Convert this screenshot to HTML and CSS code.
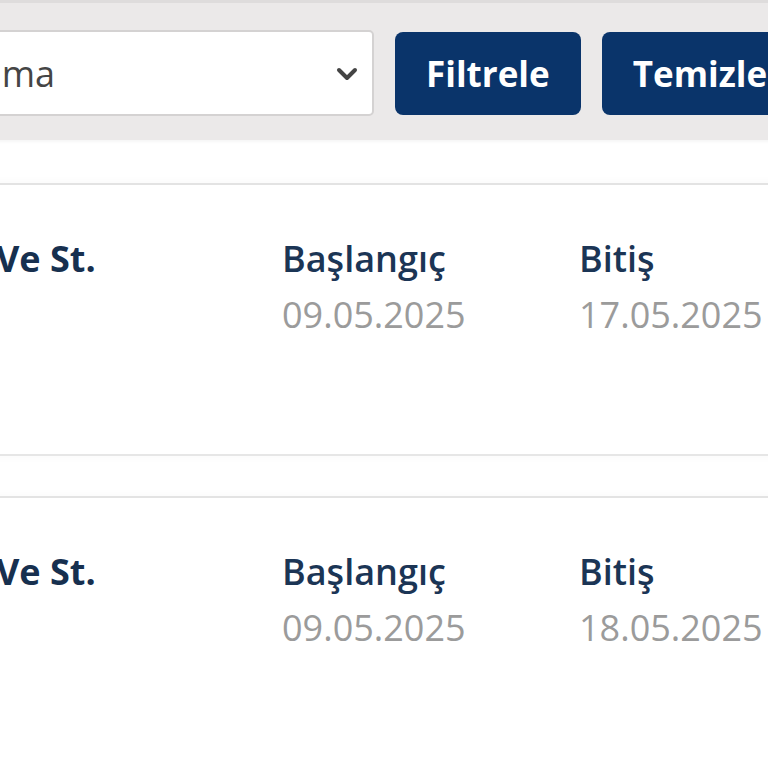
FILE: index.html
```html
<!DOCTYPE html>
<html lang="tr">
<head>
  <meta charset="UTF-8">
  <meta name="viewport" content="width=device-width, initial-scale=1.0">
  <title>Kampanyalar</title>
  <link rel="stylesheet" href="styles.css">
</head>
<body>
<div class="page">

  <div class="toolbar">
    <div class="select">
      <span class="select-value">Sıralama</span>
      <svg class="chevron" width="22" height="14" viewBox="0 0 22 14">
        <path d="M3 3 L11 11 L19 3" fill="none" stroke="#444" stroke-width="4" stroke-linecap="round" stroke-linejoin="round"/>
      </svg>
    </div>
    <button class="btn">Filtrele</button>
    <button class="btn">Temizle</button>
  </div>

  <div class="list">
    <div class="card">
      <div class="title">Bakım Ve St.</div>
      <div class="field">
        <div class="label">Başlangıç</div>
        <div class="value">09.05.2025</div>
      </div>
      <div class="field">
        <div class="label">Bitiş</div>
        <div class="value">17.05.2025</div>
      </div>
    </div>

    <div class="card">
      <div class="title">Bakım Ve St.</div>
      <div class="field">
        <div class="label">Başlangıç</div>
        <div class="value">09.05.2025</div>
      </div>
      <div class="field">
        <div class="label">Bitiş</div>
        <div class="value">18.05.2025</div>
      </div>
    </div>
  </div>

</div>
</body>
</html>
```

FILE: styles.css
```css
* {
  margin: 0;
  padding: 0;
  box-sizing: border-box;
}
body {
  height: 100vh;
  overflow: hidden;
  background: #fff;
  font-family: "Open Sans", "Noto Sans", sans-serif;
  font-size: 36px;
}
.page {
  margin-left: -150px;
  width: 1100px;
}

.toolbar {
  background: #ebe9e9;
  border-top: 3px solid #dedcdc;
  padding: 27px 0 24px 30px;
  height: 140px;
  display: flex;
  align-items: center;
  gap: 21px;
  box-shadow: 0 2px 3px rgba(0, 0, 0, 0.04);

  .select {
    width: 494px;
    height: 86px;
    background: #fff;
    border: 2px solid #d4d2d2;
    border-radius: 5px;
    padding: 0 14px 0 27px;
    display: flex;
    align-items: center;
    justify-content: space-between;
    color: #454545;
  }
  .chevron {
    margin-top: 2px;
  }
  .btn {
    height: 83px;
    padding: 0 31px;
    background: #0a346a;
    color: #fff;
    border: none;
    border-radius: 8px;
    font-family: inherit;
    font-size: 35px;
    font-weight: 700;
  }
}

.list {
  padding-top: 43px;
  display: flex;
  flex-direction: column;
  gap: 40px;
}

.card {
  border-top: 2px solid #e3e3e3;
  border-bottom: 2px solid #e6e6e6;
  box-shadow: 0 -4px 6px rgba(0, 0, 0, 0.015), 0 4px 6px rgba(0, 0, 0, 0.015);
  padding: 46px 0 0 22px;
  height: 273px;
  display: grid;
  grid-template-columns: 410px 297px 1fr;
  line-height: 56px;

  &:last-child {
    height: 320px;
  }
  .title {
    font-weight: 700;
    color: #17304f;
  }
  .label {
    font-weight: 600;
    color: #1b3555;
  }
  .value {
    color: #9b9b9b;
  }
}
```
